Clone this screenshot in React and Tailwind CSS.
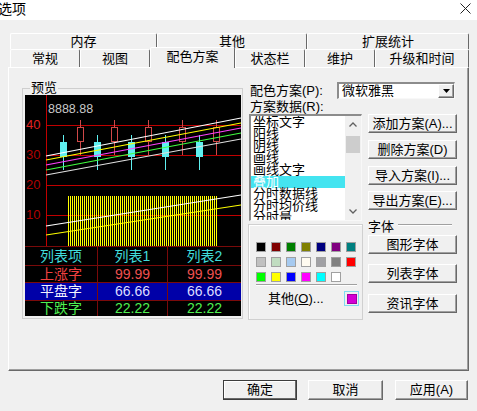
import React from "react";

const font = "font-['Liberation_Sans','Noto_Sans_CJK_SC',sans-serif]";
const raised =
  "border border-t-white border-l-white border-r-[#696969] border-b-[#696969] shadow-[inset_-1px_-1px_0_#a0a0a0] bg-[#f0f0f0]";

const backTabs = [
  { label: "内存", w: "w-[147px]" },
  { label: "其他", w: "w-[150px]" },
  { label: "扩展统计", w: "w-[162px]" },
];

const frontTabs = [
  { label: "常规", w: "w-[70px]" },
  { label: "视图", w: "w-[70px]" },
  { label: "配色方案", w: "w-[85px]", active: true },
  { label: "状态栏", w: "w-[70px]" },
  { label: "维护", w: "w-[70px]" },
  { label: "升级和时间", w: "w-[94px]" },
];

const listItems = ["坐标文字", "阳线", "阴线", "画线", "画线文字", "叠加", "分时数据线", "分时均价线", "分时量"];

const swatches = [
  "#000000", "#800000", "#008000", "#808000", "#000080", "#800080", "#008080",
  "#c0c0c0", "#c0dcc0", "#a6caf0", "#fffbf0", "#a0a0a4", "#808080", "#ff0000",
  "#00ff00", "#ffff00", "#0000ff", "#ff00ff", "#00ffff", "#ffffff",
];

const cyanCandles = [63, 97, 131, 165, 199];
const redCandles = [80, 114, 148, 182, 216];

function Chart() {
  const grid = "#c00000";
  return (
    <svg width="216" height="151" viewBox="25 95 216 151" className="block" shapeRendering="crispEdges">
      <defs>
        <pattern id="vol" width="2" height="10" patternUnits="userSpaceOnUse">
          <rect width="1" height="10" fill="#ffff00" />
        </pattern>
      </defs>
      <rect x="25" y="95" width="216" height="151" fill="#000" />
      <line x1="46.5" y1="95" x2="46.5" y2="246" stroke={grid} />
      {[125, 155, 185, 215].map((y) => (
        <line key={y} x1="46" y1={y + 0.5} x2="241" y2={y + 0.5} stroke={grid} />
      ))}
      {[
        ["40", 124, "#e02020"],
        ["30", 154, "#b00000"],
        ["20", 184, "#b00000"],
        ["10", 214, "#b00000"],
      ].map(([t, y, c]) => (
        <text key={t} x="26" y={y} fill={c} fontSize="13" fontFamily="Liberation Sans" dominantBaseline="central">
          {t}
        </text>
      ))}
      <text x="48" y="108.5" fill="#c8c8c8" fontSize="12.5" fontFamily="Liberation Sans" dominantBaseline="central">
        8888.88
      </text>
      <rect x="68" y="196" width="149" height="50" fill="url(#vol)" />
      {cyanCandles.map((c) => (
        <g key={c}>
          <line x1={c + 0.5} y1="135" x2={c + 0.5} y2="170" stroke="#5ff0f0" />
          <rect x={c - 3} y="142" width="7" height="15" fill="#5ff0f0" />
        </g>
      ))}
      {redCandles.map((c) => (
        <g key={c}>
          <line x1={c + 0.5} y1="120" x2={c + 0.5} y2="155" stroke="#d04848" />
          <rect x={c - 2.5} y="127.5" width="6" height="14" fill="#000" stroke="#d04848" />
        </g>
      ))}
      <g shapeRendering="auto" strokeWidth="1.2">
        <line x1="46" y1="156" x2="241" y2="118" stroke="#ffffff" />
        <line x1="46" y1="160" x2="241" y2="123" stroke="#ffff00" />
        <line x1="46" y1="165" x2="241" y2="128" stroke="#ff40ff" />
        <line x1="46" y1="170" x2="241" y2="133" stroke="#40ff40" />
        <line x1="46" y1="175" x2="241" y2="139" stroke="#e0e0e0" />
        <line x1="46" y1="226" x2="241" y2="195" stroke="#ffffff" />
        <line x1="46" y1="235" x2="241" y2="205" stroke="#ffff00" />
      </g>
    </svg>
  );
}

function Row({ cells, color, valueColor, h, bg = "bg-black" }) {
  return (
    <div className={`flex ${h} ${bg} border-t border-[#7a0a0a] text-[14px]`}>
      <div className={`w-[73px] flex items-center justify-center border-r border-[#7a0a0a] ${color}`}>{cells[0]}</div>
      <div className={`w-[70px] flex items-center justify-center border-r border-[#7a0a0a] ${valueColor}`}>{cells[1]}</div>
      <div className={`flex-1 flex items-center justify-center ${valueColor}`}>{cells[2]}</div>
    </div>
  );
}

function Chevron({ down }) {
  return (
    <svg width="8" height="5" viewBox="0 0 8 5">
      <polyline
        points={down ? "0.5,0.5 4,4 7.5,0.5" : "0.5,4.5 4,1 7.5,4.5"}
        fill="none"
        stroke="#606060"
        strokeWidth="1.3"
      />
    </svg>
  );
}

function Btn({ children, className = "" }) {
  return (
    <div className={`${raised} flex items-center justify-center text-[13px] ${className}`}>{children}</div>
  );
}

export default function App() {
  return (
    <div className={`w-[477px] h-[411px] bg-[#f0f0f0] overflow-hidden text-black ${font}`}>
      {/* title */}
      <div className="h-[20px] bg-white flex items-center justify-between">
        <span className="text-[14px] leading-[14px] -ml-[2px] -mt-[3px]">选项</span>
        <svg width="11" height="11" viewBox="0 0 11 11" className="mr-[6px] -mt-[4px]">
          <path d="M0.5 0.5 L10.5 10.5 M10.5 0.5 L0.5 10.5" stroke="#222" strokeWidth="1" />
        </svg>
      </div>

      {/* tabs */}
      <div className="pt-[13px]">
        <div className="flex ml-[10px] h-[16px]">
          {backTabs.map((t) => (
            <div
              key={t.label}
              className={`${t.w} flex items-center justify-center text-[13px] border-t border-l border-r border-t-white border-l-white border-r-[#696969] rounded-t-[2px]`}
            >
              {t.label}
            </div>
          ))}
        </div>
        <div className="flex items-start ml-[10px] h-[18px]">
          {frontTabs.map((t) =>
            t.active ? (
              <div
                key={t.label}
                className={`${t.w} relative z-10 -mt-[2px] h-[21px] pb-[3px] bg-[#f0f0f0] flex items-center justify-center text-[13px] border-t border-l border-r border-t-white border-l-white border-r-[#696969] rounded-t-[2px]`}
              >
                {t.label}
              </div>
            ) : (
              <div
                key={t.label}
                className={`${t.w} h-[18px] flex items-center justify-center text-[13px] border-t border-l border-r border-t-white border-l-white border-r-[#696969] rounded-t-[2px]`}
              >
                {t.label}
              </div>
            )
          )}
        </div>
      </div>

      {/* panel */}
      <div className="ml-[8px] w-[461px] h-[304px] border border-t-white border-l-white border-r-[#696969] border-b-[#696969] shadow-[inset_-1px_-1px_0_#a0a0a0] pl-[13px] pt-[13px] flex items-start">
        <fieldset className="w-[221px] border border-[#cfcfcf] pl-[2px] pr-[1px] pb-[2px]">
          <legend className="ml-[5px] px-[1px] text-[13px] leading-[14px]">预览</legend>
          <div className="w-[216px] bg-black">
            <Chart />
            <div className="h-[70px] flex flex-col">
              <Row cells={["列表项", "列表1", "列表2"]} color="text-[#40dcdc]" valueColor="text-[#40dcdc]" h="h-[19px]" />
              <Row cells={["上涨字", "99.99", "99.99"]} color="text-[#f04040]" valueColor="text-[#f05050]" h="h-[17px]" />
              <Row cells={["平盘字", "66.66", "66.66"]} color="text-[#f4f4ff]" valueColor="text-[#dcdcff]" h="h-[18px]" bg="bg-[#0000a8]" />
              <Row cells={["下跌字", "22.22", "22.22"]} color="text-[#50f050]" valueColor="text-[#50f050]" h="h-[16px]" />
            </div>
          </div>
        </fieldset>

        <div className="ml-[5px] w-[210px] flex flex-col">
          <div className="flex items-center h-[17px] mt-[1px]">
            <span className="w-[89px] pl-[2px] text-[13px]">配色方案(P):</span>
            <div className="w-[118px] h-[17px] bg-white border-t-2 border-l-2 border-r border-b border-t-[#8c8c8c] border-l-[#8c8c8c] border-r-[#f8f8f8] border-b-[#f8f8f8] flex items-center">
              <span className="flex-1 pl-[3px] text-[13px] leading-[14px]">微软雅黑</span>
              <div className={`${raised} w-[16px] h-[14px] flex items-center justify-center`}>
                <svg width="7" height="4" viewBox="0 0 7 4">
                  <polygon points="0,0 7,0 3.5,4" fill="#000" />
                </svg>
              </div>
            </div>
          </div>
          <div className="h-[15px] pl-[2px] text-[13px] leading-[15px]">方案数据(R):</div>

          <div className="flex items-start">
            <div className="flex flex-col w-[115px]">
              <div className="ml-[1px] w-[113px] h-[107px] flex bg-white border-t-2 border-l-2 border-r border-b border-t-[#8c8c8c] border-l-[#8c8c8c] border-r-[#f8f8f8] border-b-[#f8f8f8]">
                <div className="w-[94px] overflow-hidden">
                  {listItems.map((it) => (
                    <div
                      key={it}
                      className={`h-[12px] leading-[12px] pl-[2px] text-[13px] whitespace-nowrap ${
                        it === "叠加" ? "bg-[#44e4f0] text-white" : ""
                      }`}
                    >
                      {it}
                    </div>
                  ))}
                </div>
                <div className="w-[16px] bg-[#f0f0f0] flex flex-col">
                  <div className="h-[17px] flex items-center justify-center">
                    <Chevron />
                  </div>
                  <div className="mt-[3px] mx-[1px] h-[17px] bg-[#cdcdcd]" />
                  <div className="flex-1" />
                  <div className="h-[17px] flex items-center justify-center">
                    <Chevron down />
                  </div>
                </div>
              </div>

              <div className="mt-[3px] w-[115px] h-[96px] border border-[#d0d0d0] shadow-[inset_1px_1px_0_#ffffff] pl-[7px] pt-[17px]">
                <div className="grid grid-cols-[repeat(7,10px)] gap-[5px]">
                  {swatches.map((c, i) => (
                    <div key={i} className="w-[10px] h-[10px] border border-[#a0a0a0]" style={{ backgroundColor: c }} />
                  ))}
                </div>
                <div className="mt-[2px] w-[101px] h-[2px] border-t border-b border-t-[#a0a0a0] border-b-white" />
                <div className="mt-[5px] w-[103px] h-[15px] flex items-center">
                  <span className="ml-[12px] text-[13px] leading-[13px]">
                    其他(<span className="underline">O</span>)...
                  </span>
                  <div className="ml-auto w-[15px] h-[15px] border border-[#7fdcef] flex items-center justify-center">
                    <div className="w-[10px] h-[10px] bg-[#d400d4] border border-[#a000a0]" />
                  </div>
                </div>
              </div>
            </div>

            <div className="ml-[5px] w-[89px] flex flex-col">
              <Btn className="h-[19px]">添加方案(A)...</Btn>
              <Btn className="h-[19px] mt-[7px]">删除方案(D)</Btn>
              <Btn className="h-[19px] mt-[7px]">导入方案(I)...</Btn>
              <Btn className="h-[19px] mt-[6px]">导出方案(E)...</Btn>
              <div className="mt-[10px] h-[14px] flex items-start">
                <span className="text-[13px] leading-[14px]">字体</span>
                <div className="ml-[4px] mt-[4px] w-[54px] h-[2px] border-t border-b border-t-[#a0a0a0] border-b-white" />
              </div>
              <Btn className="h-[19px] mt-[1px]">图形字体</Btn>
              <Btn className="h-[19px] mt-[10px]">列表字体</Btn>
              <Btn className="h-[19px] mt-[11px]">资讯字体</Btn>
            </div>
          </div>
        </div>
      </div>

      {/* bottom buttons */}
      <div className="flex mt-[9px] ml-[223px]">
        <div className="w-[74px] h-[20px] border border-[#3c3c3c] shadow-[inset_-1px_-1px_0_#696969,inset_1px_1px_0_#ffffff] bg-[#f0f0f0] flex items-center justify-center text-[13px]">
          确定
        </div>
        <Btn className="w-[75px] h-[20px] ml-[11px]">取消</Btn>
        <Btn className="w-[73px] h-[20px] ml-[12px]">应用(A)</Btn>
      </div>
    </div>
  );
}
